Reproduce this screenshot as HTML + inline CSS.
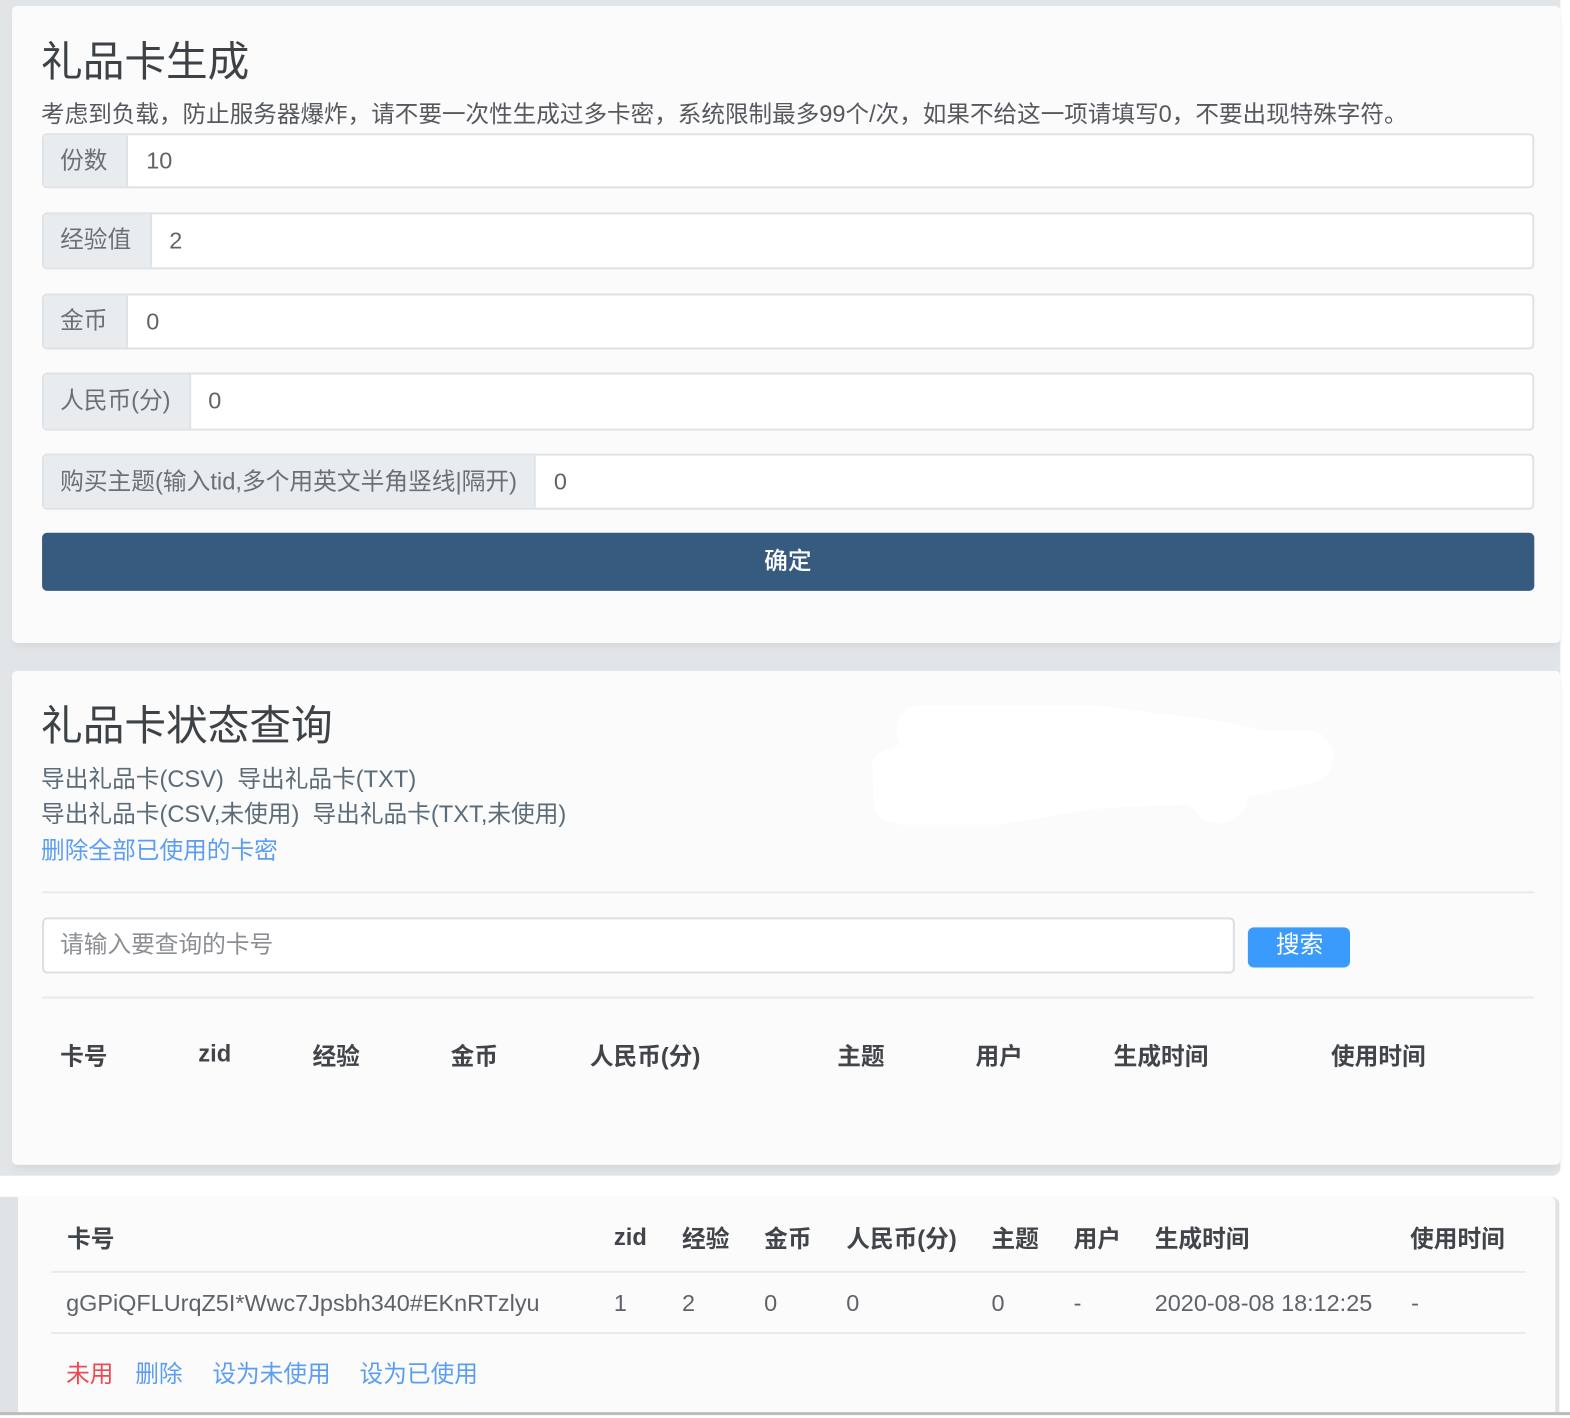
<!DOCTYPE html>
<html lang="zh"><head><meta charset="utf-8"><title>礼品卡</title>
<style>
html,body{margin:0;padding:0;background:#fff}
body{width:1570px;height:1416px;position:relative;overflow:hidden;font-family:"Liberation Sans","Noto Sans CJK SC",sans-serif;font-size:23.65px;color:#55595e}
#w{left:0;top:0;width:1570px;height:1416px;transform:scale(1.0015);transform-origin:0 0;filter:blur(.35px)}
div,span{position:absolute;box-sizing:border-box}
.t{line-height:40px;white-space:nowrap;height:40px}
.card{background:#fbfbfc;border-radius:5px}
.h{font-size:41.6px;color:#3d4246}
.box{left:42px;width:1490px;background:#fff;border:2px solid #dfe2e5;border-radius:5px}
.ad{left:0;top:0;bottom:0;background:#e9ecef;border-right:2px solid #dfe2e5;border-radius:4px 0 0 4px}
.g{color:#6c7075}
.v{color:#5f6368;font-size:23.4px}
.a{color:#5b9df2}
.d{color:#5b6b78}
.b{font-weight:700;color:#41454a}
.l{height:2px;background:#e8eaec}
</style></head><body><div id="w">
<div style="left:0;top:0;width:1558px;height:1174px;background:#e1e5e8;border-radius:0 0 8px 0"></div>
<div class="card" style="left:12px;top:6px;width:1546px;height:636px;box-shadow:0 6px 6px -2px #d6dadd"></div>
<div class="card" style="left:12px;top:670px;width:1546px;height:493px;box-shadow:0 6px 6px -2px #d6dadd"></div>
<div style="left:0;top:1195px;width:1557px;height:216px;background:#dfe3e6;border-radius:0 8px 0 0"></div>
<div class="card" style="left:18px;top:1195px;width:1535px;height:216px;border-radius:0 5px 0 0"></div>
<div style="left:0;top:1410px;width:1570px;height:3px;background:#bdbbbb"></div>

<span class="t h" style="left:41px;top:42px">礼品卡生成</span>
<span class="t" style="left:41px;top:94px;font-size:23.55px">考虑到负载，防止服务器爆炸，请不要一次性生成过多卡密，系统限制最多99个/次，如果不给这一项请填写0，不要出现特殊字符。</span>

<div class="box" style="top:133px;height:55px"><div class="ad" style="width:84px"></div></div>
<span class="t g" style="left:60px;top:141px">份数</span><span class="t v" style="left:146px;top:140px">10</span>
<div class="box" style="top:212px;height:57px"><div class="ad" style="width:108px"></div></div>
<span class="t g" style="left:60px;top:220px">经验值</span><span class="t v" style="left:169px;top:220px">2</span>
<div class="box" style="top:293px;height:56px"><div class="ad" style="width:84px"></div></div>
<span class="t g" style="left:60px;top:301px">金币</span><span class="t v" style="left:146px;top:301px">0</span>
<div class="box" style="top:372px;height:58px"><div class="ad" style="width:147px"></div></div>
<span class="t g" style="left:60px;top:381px">人民币(分)</span><span class="t v" style="left:208px;top:380px">0</span>
<div class="box" style="top:453px;height:56px"><div class="ad" style="width:491px"></div></div>
<span class="t g" style="left:60px;top:462px;font-size:23.7px">购买主题(输入tid,多个用英文半角竖线|隔开)</span><span class="t v" style="left:553px;top:461px">0</span>
<div style="left:42px;top:532px;width:1490px;height:58px;background:#375a7f;border-radius:5px"></div>
<span class="t" style="left:763px;top:541px;color:#fff;font-weight:500">确定</span>

<span class="t h" style="left:41px;top:705px">礼品卡状态查询</span>
<span class="t d" style="left:41px;top:759px">导出礼品卡(CSV)</span>
<span class="t d" style="left:237px;top:759px">导出礼品卡(TXT)</span>
<span class="t d" style="left:41px;top:794px">导出礼品卡(CSV,未使用)</span>
<span class="t d" style="left:312px;top:794px">导出礼品卡(TXT,未使用)</span>
<span class="t a" style="left:41px;top:830px">删除全部已使用的卡密</span>
<svg style="position:absolute;left:800px;top:660px" width="588" height="180" viewBox="0 0 1200 540" preserveAspectRatio="none"><path fill="#fff" d="M240 133L600 133L830 175L950 208L1050 210Q1085 240 1085 295Q1080 350 1040 365L910 408Q910 450 880 475Q850 500 815 470Q800 450 790 430L620 440L400 490L200 490Q150 480 147 420L145 300Q150 270 203 250Q190 220 196 190Q205 140 240 133Z"/></svg>
<div class="l" style="left:42px;top:890px;width:1490px"></div>
<div class="box" style="top:916px;width:1191px;height:56px;border-color:#dcdfe2"></div>
<span class="t" style="left:60px;top:924px;color:#8b8f94">请输入要查询的卡号</span>
<div style="left:1246px;top:926px;width:102px;height:40px;background:#3a9bfc;border-radius:6px"></div>
<span class="t" style="left:1274px;top:924px;color:#fff">搜索</span>
<div class="l" style="left:42px;top:995px;width:1490px"></div>

<span class="t b" style="left:60px;top:1036px">卡号</span>
<span class="t b" style="left:198px;top:1033px">zid</span>
<span class="t b" style="left:312px;top:1036px">经验</span>
<span class="t b" style="left:450px;top:1036px">金币</span>
<span class="t b" style="left:589px;top:1036px">人民币(分)</span>
<span class="t b" style="left:836px;top:1036px">主题</span>
<span class="t b" style="left:974px;top:1036px">用户</span>
<span class="t b" style="left:1112px;top:1036px">生成时间</span>
<span class="t b" style="left:1329px;top:1036px">使用时间</span>

<span class="t b" style="left:67px;top:1218px">卡号</span>
<span class="t b" style="left:613px;top:1216px">zid</span>
<span class="t b" style="left:681px;top:1218px">经验</span>
<span class="t b" style="left:763px;top:1218px">金币</span>
<span class="t b" style="left:845px;top:1218px">人民币(分)</span>
<span class="t b" style="left:990px;top:1218px">主题</span>
<span class="t b" style="left:1072px;top:1218px">用户</span>
<span class="t b" style="left:1153px;top:1218px">生成时间</span>
<span class="t b" style="left:1408px;top:1218px">使用时间</span>
<div class="l" style="left:51px;top:1269px;width:1472px"></div>
<span class="t v" style="left:66px;top:1281px">gGPiQFLUrqZ5I*Wwc7Jpsbh340#EKnRTzlyu</span>
<span class="t v" style="left:613px;top:1281px">1</span>
<span class="t v" style="left:681px;top:1281px">2</span>
<span class="t v" style="left:763px;top:1281px">0</span>
<span class="t v" style="left:845px;top:1281px">0</span>
<span class="t v" style="left:990px;top:1281px">0</span>
<span class="t v" style="left:1072px;top:1281px">-</span>
<span class="t v" style="left:1153px;top:1281px">2020-08-08 18:12:25</span>
<span class="t v" style="left:1409px;top:1281px">-</span>
<div class="l" style="left:51px;top:1330px;width:1472px"></div>
<span class="t" style="left:66px;top:1353px;color:#f0484f">未用</span>
<span class="t a" style="left:135px;top:1353px">删除</span>
<span class="t a" style="left:212px;top:1353px">设为未使用</span>
<span class="t a" style="left:359px;top:1353px">设为已使用</span>
</div></body></html>
